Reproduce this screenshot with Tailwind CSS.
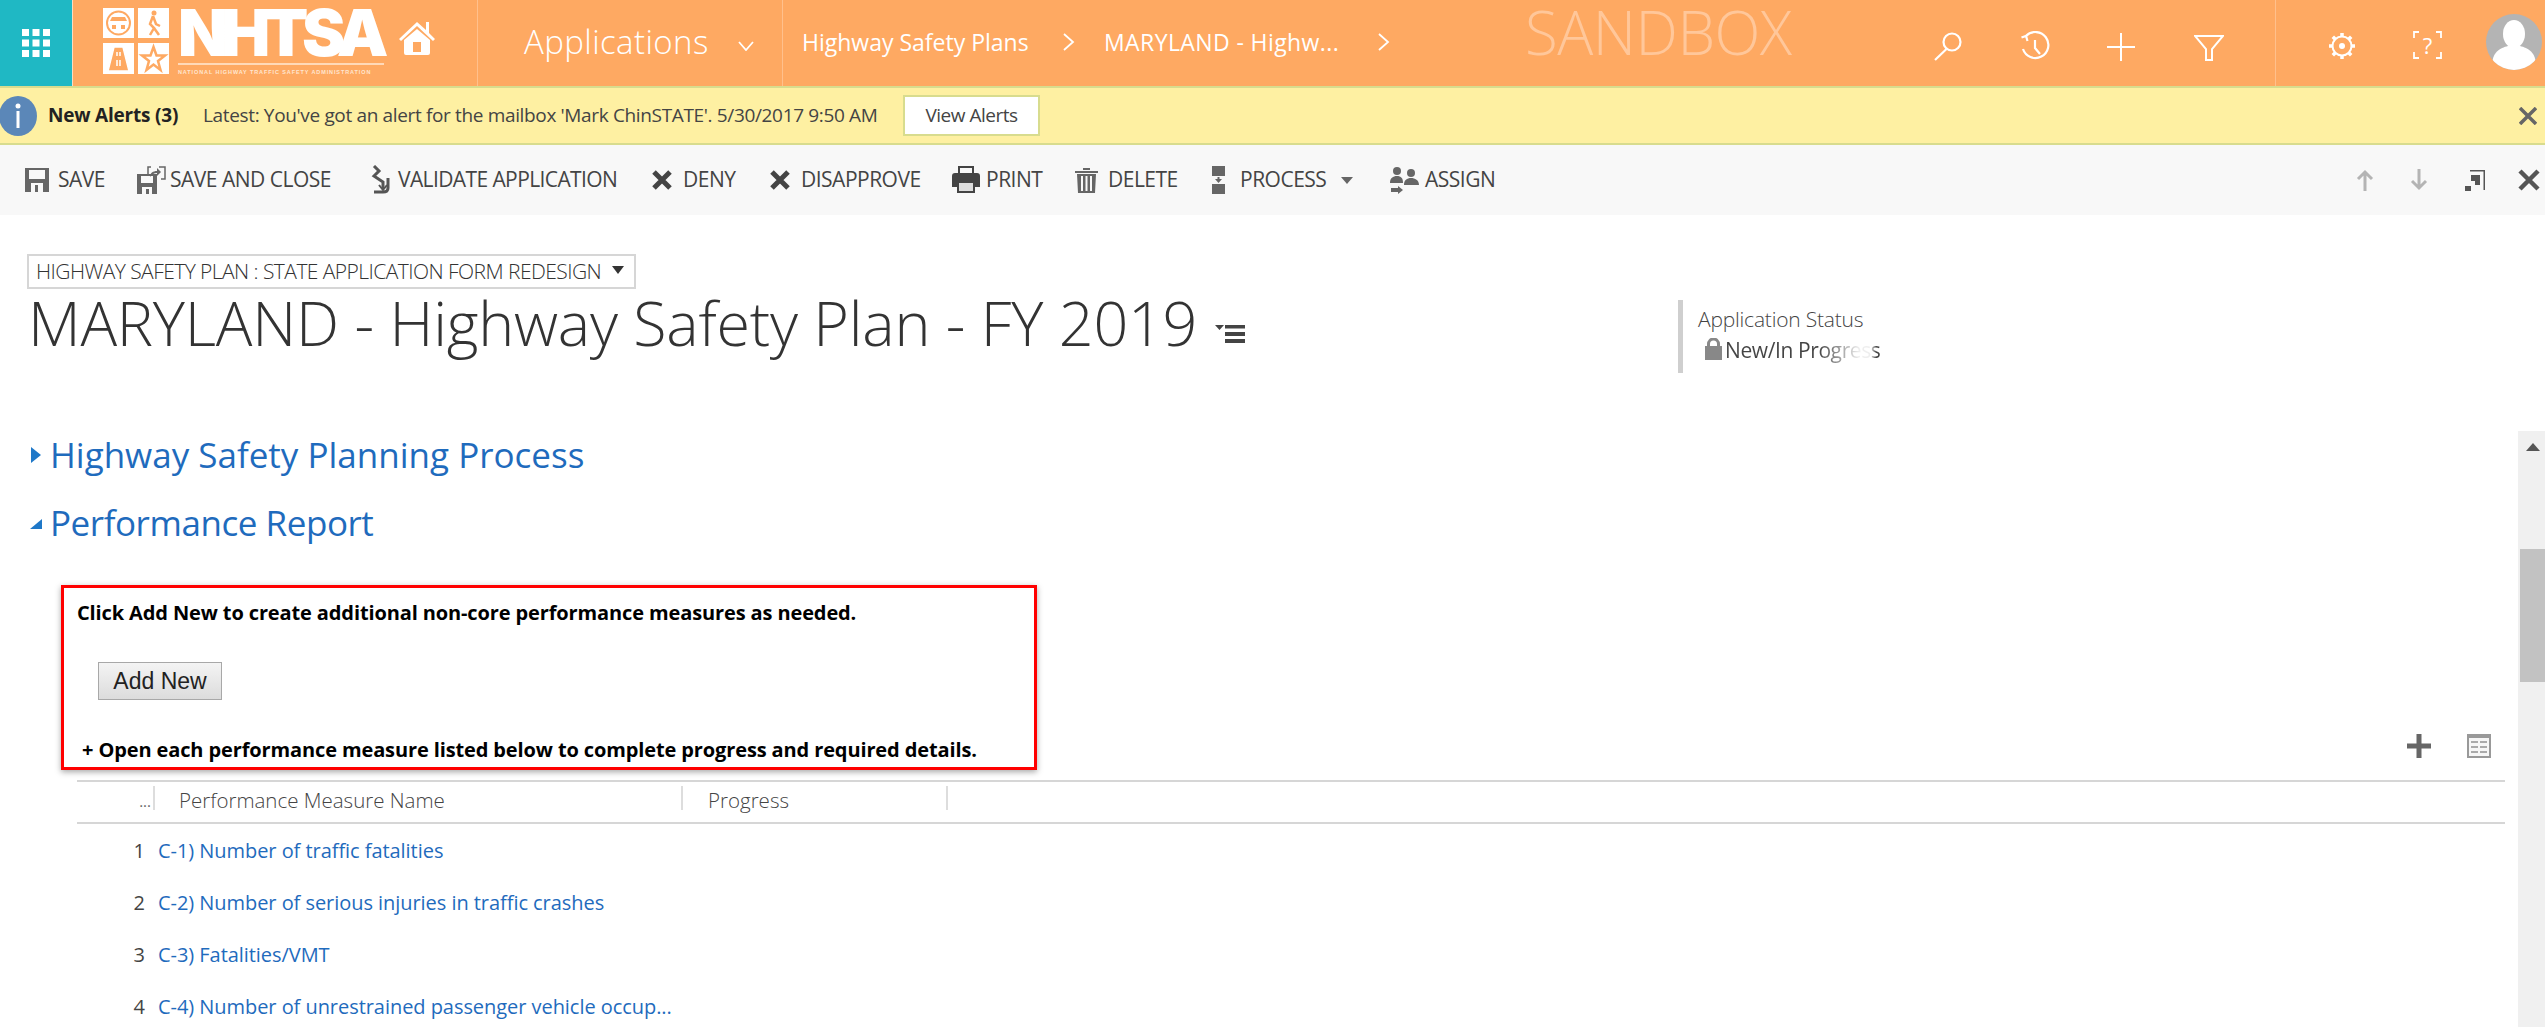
<!doctype html>
<html>
<head>
  <meta charset="UTF-8" />
  <title>MARYLAND - Highway Safety Plan - FY 2019</title>
  <script src="https://cdn.jsdelivr.net/npm/@tailwindcss/browser@4"></script>
</head>
<body class="bg-white font-['Open_Sans',sans-serif]">
<div class="w-[2545px] h-[1027px] overflow-hidden flex flex-col">

  <!-- Top nav -->
  <header class="h-[88px] shrink-0 flex bg-[#fea962] border-b-2 border-[#d8dc8e] text-white relative">
    <div class="w-[73px] bg-[#1fb8c4] border-r border-[#fcdcc0] flex items-center justify-center">
      <svg width="28" height="28" viewBox="0 0 28 28" fill="#fff">
        <rect x="0" y="0" width="7" height="7"/><rect x="10.5" y="0" width="7" height="7"/><rect x="21" y="0" width="7" height="7"/>
        <rect x="0" y="10.5" width="7" height="7"/><rect x="10.5" y="10.5" width="7" height="7"/><rect x="21" y="10.5" width="7" height="7"/>
        <rect x="0" y="21" width="7" height="7"/><rect x="10.5" y="21" width="7" height="7"/><rect x="21" y="21" width="7" height="7"/>
      </svg>
    </div>
    <!-- Logo -->
    <div class="w-[405px] border-r border-[#ffc08c] flex items-start pl-[30px] pt-[8px]">
      <svg width="66" height="66" viewBox="0 0 66 66" class="shrink-0">
        <rect x="0" y="0" width="31" height="30" fill="#fff"/><rect x="35" y="0" width="31" height="30" fill="#fff"/>
        <rect x="0" y="35" width="31" height="31" fill="#fff"/><rect x="35" y="35" width="31" height="31" fill="#fff"/>
        <circle cx="15.500" cy="15" r="11.500" fill="none" stroke="#fea962" stroke-width="2"/>
        <path d="M7 13h17l-2-4H9zM9 17h4v4H9zM18 17h4v4h-4z" fill="#fea962"/>
        <circle cx="51" cy="5" r="2.500" fill="#fea962"/>
        <path d="M50 8l-3 8 4 4-4 7M50 8l3 8 4 2M51 20l5 7" fill="none" stroke="#fea962" stroke-width="2.500"/>
        <path d="M11 39h9l6 24H5zM14 44v4M17 44v4M14 52v6M17 52v6" fill="#fea962" stroke="#fff" stroke-width="1.500"/>
        <path d="M50.500 39l3 8.500h8.500l-7 5.500 2.500 9-7-5.500-7 5.500 2.500-9-7-5.500h8.500z" fill="none" stroke="#fea962" stroke-width="2.500"/>
      </svg>
      <div class="ml-[9px] w-[206px] flex flex-col shrink-0">
        <div class="h-[50px] text-[65px] leading-[50px] font-['Inter',sans-serif] font-black tracking-[-6.500px] whitespace-nowrap">NHTSA</div>
        <div class="mt-[5px] h-[2px] bg-[#ffd9b8]"></div>
        <div class="mt-[3px] text-[5.500px] leading-[8px] font-bold tracking-[0.9px] whitespace-nowrap text-[#ffe6d0] font-['Liberation_Sans',sans-serif]">NATIONAL HIGHWAY TRAFFIC SAFETY ADMINISTRATION</div>
      </div>
      <svg width="38" height="36" viewBox="0 0 38 36" fill="#fff" class="ml-[14px] mt-[12px] shrink-0">
        <path d="M19 2L1 19l2 2L19 6l16 15 2-2-6-6V2h-3v8z"/>
        <path d="M6 20L19 9l13 11v13a2 2 0 0 1-2 2H8a2 2 0 0 1-2-2zM15 22v10h8V22z" fill-rule="evenodd"/>
      </svg>
    </div>
    <!-- Applications -->
    <div class="w-[305px] border-r border-[#ffc08c] flex items-center pl-[46px] pb-[3px]">
      <span class="text-[33px] font-light tracking-[0.4px]">Applications</span>
      <svg width="16" height="10" viewBox="0 0 16 10" class="ml-[29px] mt-[8px]" fill="none" stroke="#fff" stroke-width="1.800"><path d="M1 1l7 8 7-8"/></svg>
    </div>
    <!-- Breadcrumb -->
    <div class="flex items-center pl-[19px] pb-[2px] text-[23px] whitespace-nowrap">
      <span class="w-[231px]">Highway Safety Plans</span>
      <svg width="12" height="18" viewBox="0 0 12 18" class="ml-[30px]" fill="none" stroke="#fff" stroke-width="1.800"><path d="M1 1l9 8-9 8"/></svg>
      <span class="ml-[29px] w-[240px] tracking-[0.4px]">MARYLAND - Highw...</span>
      <svg width="12" height="18" viewBox="0 0 12 18" class="ml-[34px]" fill="none" stroke="#fff" stroke-width="1.800"><path d="M1 1l9 8-9 8"/></svg>
    </div>
    <div class="ml-[135px] mt-[-4px] text-[60px] leading-[72px] font-light text-[#ffc79a] tracking-[-0.5px]">SANDBOX</div>
    <!-- Right icons -->
    <div class="ml-auto flex items-start">
      <svg width="30" height="30" viewBox="0 0 30 30" class="mt-[31px]" fill="none" stroke="#fff" stroke-width="2.200"><circle cx="19" cy="11" r="8.500"/><path d="M13.500 18L2 29"/></svg>
      <svg width="30" height="30" viewBox="0 0 30 30" class="ml-[57px] mt-[31px]" fill="none" stroke="#fff" stroke-width="2.200"><path d="M6 5a13 13 0 1 1-3 13"/><path d="M1.500 6.500l4.500-1.500 1.500 5"/><path d="M15 9v8l5 6"/></svg>
      <svg width="28" height="28" viewBox="0 0 28 28" class="ml-[57px] mt-[33px]" fill="none" stroke="#fff" stroke-width="2"><path d="M14 0v28M0 14h28"/></svg>
      <svg width="30" height="26" viewBox="0 0 30 26" class="ml-[59px] mt-[35px]" fill="none" stroke="#fff" stroke-width="2"><path d="M1 1h28L18 14v11h-6V14z"/></svg>
      <div class="ml-[51px] w-px h-[86px] bg-[#ffc08c]"></div>
      <svg width="28" height="28" viewBox="0 0 28 28" class="ml-[52px] mt-[32px]" fill="none" stroke="#fff" stroke-width="2.600"><circle cx="14" cy="14" r="3" fill="#fff" stroke="none"/><circle cx="14" cy="14" r="9.500" stroke-width="2"/><path d="M14 1v3.500M14 23.500V27M1 14h3.500M23.500 14H27M4.800 4.800l2.500 2.500M20.700 20.700l2.500 2.500M4.800 23.200l2.500-2.500M20.700 7.300l2.500-2.500" stroke-width="3.500"/></svg>
      <div class="ml-[57px] mt-[31px] w-[29px] h-[28px] relative">
        <svg width="29" height="28" viewBox="0 0 29 28" fill="none" stroke="#fff" stroke-width="1.800" class="absolute inset-0"><path d="M6 1H1v6M23 1h5v6M6 27H1v-6M23 27h5v-6"/></svg>
        <span class="absolute inset-0 text-center text-[22px] leading-[28px] text-white">?</span>
      </div>
      <div class="ml-[44px] mt-[14px] mr-[3px] w-[56px] h-[56px] rounded-full bg-[#b4b4b4] overflow-hidden">
        <svg width="56" height="56" viewBox="0 0 56 56" fill="#fff"><ellipse cx="28" cy="20" rx="11" ry="14"/><path d="M6 52c0-14 8-18 16-20h12c8 2 16 6 16 20v4H6z"/></svg>
      </div>
    </div>
  </header>

  <!-- Alert bar -->
  <div class="h-[57px] shrink-0 flex items-center bg-[#fef0a2] border-b-2 border-[#d8dc8e] text-[19px] text-[#444] relative">
    <svg width="38" height="40" viewBox="0 0 38 40" class="shrink-0"><ellipse cx="18" cy="20" rx="19" ry="20" fill="#5b87b8"/><circle cx="18" cy="10" r="2.500" fill="#fff"/><rect x="16.500" y="15" width="3" height="17" fill="#fff"/></svg>
    <span class="ml-[10px] w-[155px] font-bold text-[#222] tracking-[-0.2px]">New Alerts (3)</span>
    <span class="w-[700px] whitespace-nowrap tracking-[-0.35px]">Latest: You've got an alert for the mailbox 'Mark ChinSTATE'. 5/30/2017 9:50 AM</span>
    <button class="w-[137px] h-[41px] bg-white border-2 border-[#d8dc8e] text-[19px] text-[#444] tracking-[-0.5px]">View Alerts</button>
    <svg width="18" height="18" viewBox="0 0 18 18" class="ml-auto mr-[8px]" fill="none" stroke="#666" stroke-width="3.500"><path d="M1 1l16 16M17 1L1 17"/></svg>
  </div>

  <!-- Command bar -->
  <div class="h-[70px] shrink-0 flex items-center bg-[#f8f8f8] text-[21px] text-[#444] tracking-[-0.5px] pl-[24px] whitespace-nowrap">
    <div class="flex items-center w-[112px]">
      <svg width="26" height="26" viewBox="0 0 26 26"><path d="M1 1h24v24H1z" fill="#666"/><path d="M5 3h16v9H5z" fill="#f8f8f8"/><path d="M7 16h12v9H7z" fill="#f8f8f8"/><path d="M11 18h3v7h-3z" fill="#666"/></svg>
      <span class="ml-[8px]">SAVE</span>
    </div>
    <div class="flex items-center w-[234px]">
      <svg width="30" height="28" viewBox="0 0 30 28"><path d="M1 8h20v20H1z" fill="#666"/><path d="M5 10h12v7H5z" fill="#f8f8f8"/><path d="M6 21h10v7H6z" fill="#f8f8f8"/><path d="M10 23h3v5h-3z" fill="#666"/><path d="M15 1h-3v7M23 1h6v12h-4" fill="none" stroke="#666" stroke-width="1.500"/><path d="M14 11c0-4 3-6 7-6V2l4 4-4 4V7c-3 0-5 1-7 4z" fill="#666"/></svg>
      <span class="ml-[4px]">SAVE AND CLOSE</span>
    </div>
    <div class="flex items-center w-[282px]">
      <svg width="20" height="30" viewBox="0 0 20 30" fill="none" stroke="#555" stroke-width="3"><path d="M4 1l5 5-5 5 9 6v7"/><path d="M18 13v10c0 3-2 4-5 4H4"/><path d="M9 20l4 5 4-5" stroke-width="2"/></svg>
      <span class="ml-[8px] tracking-[-0.6px]">VALIDATE APPLICATION</span>
    </div>
    <div class="flex items-center w-[118px]">
      <svg width="20" height="20" viewBox="0 0 20 20" fill="none" stroke="#444" stroke-width="5"><path d="M2 2l16 16M18 2L2 18"/></svg>
      <span class="ml-[11px]">DENY</span>
    </div>
    <div class="flex items-center w-[182px]">
      <svg width="20" height="20" viewBox="0 0 20 20" fill="none" stroke="#444" stroke-width="5"><path d="M2 2l16 16M18 2L2 18"/></svg>
      <span class="ml-[11px]">DISAPPROVE</span>
    </div>
    <div class="flex items-center w-[123px]">
      <svg width="28" height="28" viewBox="0 0 28 28"><path d="M7 1h14v7H7z" fill="none" stroke="#444" stroke-width="2"/><path d="M3 7h22a3 3 0 0 1 3 3v11h-5v6H5v-6H0V10a3 3 0 0 1 3-3z" fill="#444"/><path d="M7 17h14v8H7z" fill="#ddd"/></svg>
      <span class="ml-[6px]">PRINT</span>
    </div>
    <div class="flex items-center w-[137px]">
      <svg width="23" height="26" viewBox="0 0 23 26" fill="#666"><path d="M0 4h23v2H0zM8 1h7v2H8zM2 7h19l-1 19H3zM6 9v15h2V9zM10.500 9v15h2V9zM15 9v15h2V9z" fill-rule="evenodd"/></svg>
      <span class="ml-[10px]">DELETE</span>
    </div>
    <div class="flex items-center w-[178px]">
      <svg width="13" height="28" viewBox="0 0 13 28" fill="#666"><path d="M0 0h13v10H0zM0 18h13v10H0zM5.500 11h2v2H10l-3.500 4L3 13h2.500z"/></svg>
      <span class="ml-[15px]">PROCESS</span>
      <svg width="12" height="7" viewBox="0 0 12 7" class="ml-[15px]" fill="#666"><path d="M0 0h12L6 7z"/></svg>
    </div>
    <div class="flex items-center">
      <svg width="29" height="28" viewBox="0 0 29 28" fill="#666"><circle cx="7" cy="5" r="4"/><circle cx="21" cy="7" r="4"/><path d="M0 17c0-5 3-7 7-7s6 2 6 7zM14 19c0-5 3-7 7-7s8 2 8 7zM1 22h7v-2l5 4-5 4v-2H1z"/></svg>
      <span class="ml-[6px]">ASSIGN</span>
    </div>
    <div class="ml-auto flex items-center">
      <svg width="18" height="22" viewBox="0 0 18 22" fill="none" stroke="#b4b4b4" stroke-width="3"><path d="M9 22V3M2 10l7-7 7 7"/></svg>
      <svg width="18" height="22" viewBox="0 0 18 22" class="ml-[36px]" fill="none" stroke="#b4b4b4" stroke-width="3"><path d="M9 0v19M2 12l7 7 7-7"/></svg>
      <svg width="21" height="22" viewBox="0 0 21 22" class="ml-[37px]" fill="#555"><path d="M5 1h15v20h-1.500V2.500H5zM6 6h9v10h-5v-4H6zM0 17h6v5H0z"/></svg>
      <svg width="22" height="22" viewBox="0 0 22 22" class="ml-[32px] mr-[5px]" fill="none" stroke="#555" stroke-width="4.500"><path d="M2 2l18 18M20 2L2 20"/></svg>
    </div>
  </div>

  <!-- Form header -->
  <div class="h-[216px] shrink-0 relative flex justify-between">
    <div class="pl-[27px] pt-[39px]">
      <div class="w-[609px] h-[35px] border-2 border-[#d6d6d6] flex items-center pl-[7px] text-[21px] font-light text-[#333] whitespace-nowrap tracking-[-0.55px]">
        <span>HIGHWAY SAFETY PLAN : STATE APPLICATION FORM REDESIGN</span>
        <svg width="12" height="8" viewBox="0 0 12 8" class="ml-[11px] mb-[4px]" fill="#333"><path d="M0 0h12L6 8z"/></svg>
      </div>
      <div class="flex items-start">
        <h1 class="pl-[1px] text-[61px] leading-[68px] font-light text-[#333] whitespace-nowrap tracking-[-0.23px]">MARYLAND - Highway Safety Plan - FY 2019</h1>
        <svg width="30" height="18" viewBox="0 0 30 18" class="ml-[18px] mt-[36px]" fill="#444"><path d="M0 0h9l-4.500 5zM10 0h20v3.500H10zM10 7h20v4H10zM10 14h20v4H10z"/></svg>
      </div>
    </div>
    <div class="absolute left-[1678px] top-[85px] w-[260px] h-[73px] border-l-[5px] border-[#cfcfcf] pl-[15px] pt-[3px] text-[#444]">
      <div class="text-[21px] leading-[32px] font-light tracking-[-0.2px]">Application Status</div>
      <div class="flex items-center pl-[7px]">
        <svg width="17" height="22" viewBox="0 0 17 22" class="mb-[4px]"><path d="M3.500 9V6a5 5 0 0 1 10 0v3" fill="none" stroke="#888" stroke-width="3"/><rect x="0" y="8" width="17" height="14" fill="#888"/></svg>
        <span class="ml-[3px] w-[156px] overflow-hidden whitespace-nowrap text-[21px] tracking-[-0.4px] bg-[linear-gradient(90deg,#444_60%,#eee_86%,#eee_93%,#444_97%)] bg-clip-text text-transparent">New/In Progress</span>
      </div>
    </div>
  </div>

  <!-- Scrolling body -->
  <div class="flex-1 flex min-h-0">
    <main class="flex-1 min-w-0 relative">
      <button class="flex items-center h-[44px] mt-[2px] text-[#1f6bbd]">
        <svg width="10" height="16" viewBox="0 0 10 16" class="ml-[31px]" fill="#1f78c8"><path d="M0 0l10 8-10 8z"/></svg>
        <span class="ml-[9px] text-[35px] leading-[44px] whitespace-nowrap">Highway Safety Planning Process</span>
      </button>
      <button class="flex items-center h-[44px] mt-[24px] text-[#1f6bbd]">
        <svg width="12" height="10" viewBox="0 0 12 10" class="ml-[30px] mt-[2px]" fill="#1f78c8"><path d="M12 0v10H0z"/></svg>
        <span class="ml-[8px] text-[35px] leading-[44px] whitespace-nowrap tracking-[-0.45px]">Performance Report</span>
      </button>

      <!-- Instruction box -->
      <div class="ml-[61px] mt-[40px] w-[976px] h-[185px] border-[3px] border-[#f00] shadow-[0_2px_6px_rgba(0,0,0,0.35)] font-bold text-black text-[20px] tracking-[-0.12px] whitespace-nowrap pl-[13px] bg-white relative z-10">
        <div class="leading-[28px] mt-[11px]">Click Add New to create additional non-core performance measures as needed.</div>
        <button class="block ml-[21px] mt-[35px] w-[124px] h-[38px] border border-[#a8a8a8] bg-linear-to-b from-[#f4f4f4] to-[#dcdcdc] text-[23px] font-normal text-[#222] font-['Liberation_Sans',sans-serif] tracking-normal">Add New</button>
        <div class="leading-[28px] mt-[36px] pl-[5px] font-bold">+ Open each performance measure listed below to complete progress and required details.</div>
      </div>

      <!-- Grid toolbar -->
      <div class="absolute right-[27px] top-[303px] flex items-center">
        <svg width="24" height="24" viewBox="0 0 24 24" fill="#666"><path d="M9.500 0h5v9.500H24v5h-9.500V24h-5v-9.500H0v-5h9.500z"/></svg>
        <svg width="24" height="24" viewBox="0 0 24 24" class="ml-[36px]"><rect width="24" height="24" fill="#999"/><rect x="2" y="4" width="20" height="18" fill="#f6f6f6"/><path d="M4 7h7v2H4zM13 7h7v2H13zM4 12h7v2H4zM13 12h7v2H13zM4 17h7v2H4zM13 17h7v2H13z" fill="#aaa"/></svg>
      </div>

      <!-- Grid -->
      <div class="ml-[77px] mr-[13px] mt-[10px] border-t-2 border-[#d6d6d6]">
        <div class="h-[42px] pt-[4px] border-b-2 border-[#d6d6d6] flex items-start text-[20.500px] font-light text-[#444]">
          <span class="w-[76px] h-[24px] text-right text-[15px] font-normal text-[#666] pr-[2px] leading-[30px]">...</span>
          <div class="w-[528px] h-[24px] border-l-2 border-[#ddd] pl-[24px] leading-[28px] whitespace-nowrap">Performance Measure Name</div>
          <div class="w-[265px] h-[24px] border-l-2 border-[#ddd] pl-[25px] leading-[28px]">Progress</div>
          <div class="h-[24px] border-l-2 border-[#ddd]"></div>
        </div>
        <ul class="pt-[1px] text-[20px] tracking-[-0.05px]">
          <li class="h-[52px] flex items-center"><span class="w-[68px] text-right text-[#444]">1</span><a href="#" class="ml-[13px] text-[#1f6bbd] whitespace-nowrap">C-1) Number of traffic fatalities</a></li>
          <li class="h-[52px] flex items-center"><span class="w-[68px] text-right text-[#444]">2</span><a href="#" class="ml-[13px] text-[#1f6bbd] whitespace-nowrap">C-2) Number of serious injuries in traffic crashes</a></li>
          <li class="h-[52px] flex items-center"><span class="w-[68px] text-right text-[#444]">3</span><a href="#" class="ml-[13px] text-[#1f6bbd] whitespace-nowrap">C-3) Fatalities/VMT</a></li>
          <li class="h-[52px] flex items-center"><span class="w-[68px] text-right text-[#444]">4</span><a href="#" class="ml-[13px] text-[#1f6bbd] whitespace-nowrap">C-4) Number of unrestrained passenger vehicle occup...</a></li>
        </ul>
      </div>
    </main>

    <!-- Scrollbar -->
    <div class="w-[27px] shrink-0 bg-[#f0f0f0] relative">
      <svg width="14" height="8" viewBox="0 0 14 8" class="absolute left-[8px] top-[12px]" fill="#555"><path d="M7 0l7 8H0z"/></svg>
      <div class="absolute left-[2px] right-0 top-[118px] h-[133px] bg-[#c2c2c2]"></div>
    </div>
  </div>
</div>
</body>
</html>
